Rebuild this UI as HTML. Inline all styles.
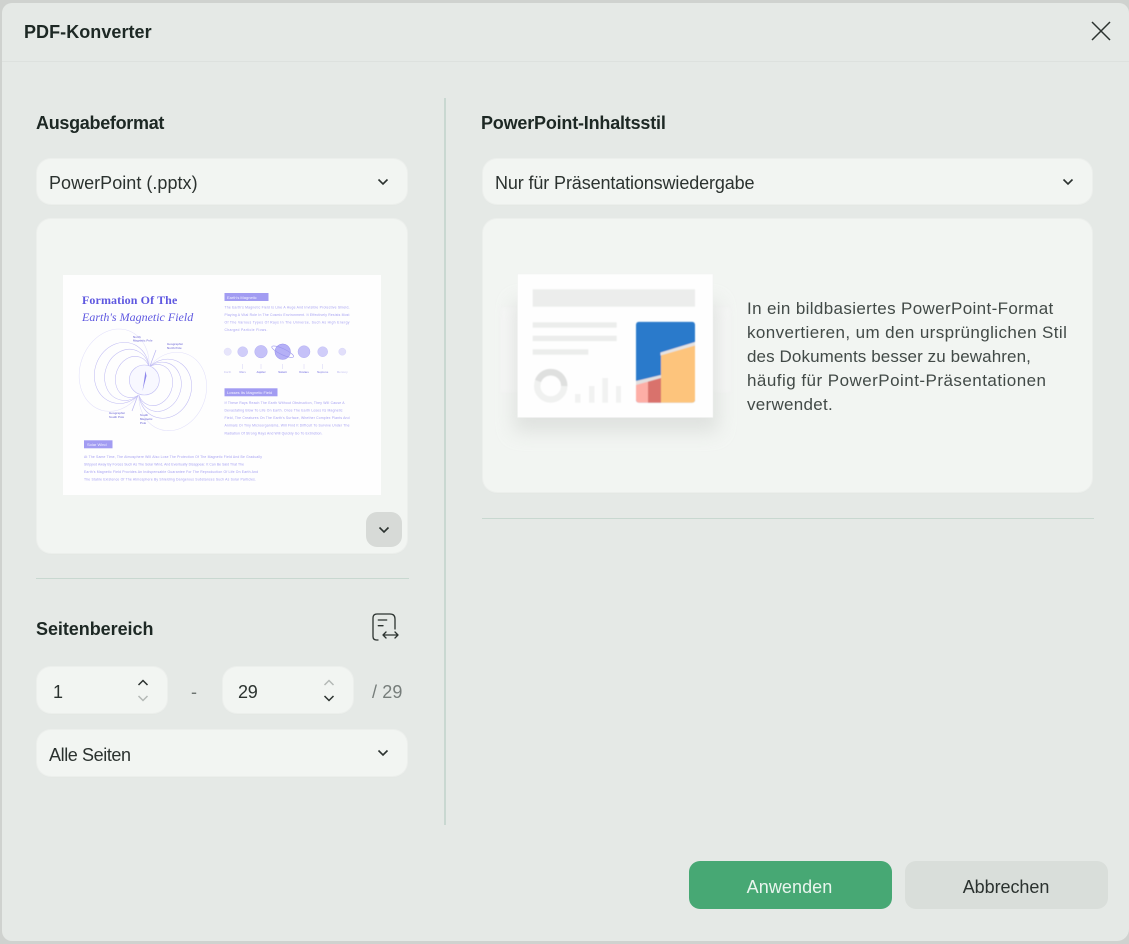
<!DOCTYPE html>
<html lang="de"><head><meta charset="utf-8"><title>PDF-Konverter</title>
<style>
html,body{margin:0;padding:0;background:#cfd2cf}
body{width:1129px;height:944px;overflow:hidden;position:relative;font-family:"Liberation Sans",sans-serif;color:#2b322f}
.abs,.t,.card{position:absolute}
#dlg{position:absolute;left:2px;top:3px;width:1127px;height:938px;background:#e5e9e6;border-radius:10px 10px 12px 10px;overflow:hidden}
.card{background:#f2f5f2;border-radius:14px;box-shadow:0 0 0 1px #ecefec,0 1px 1px #dcdfdc}
.t{white-space:nowrap;line-height:24px}
.b{font-weight:bold;color:#1d2824;font-size:18px}
.r{font-size:18px}
.p{font-size:17px;color:#424a47;left:747px}
svg{position:absolute;overflow:visible}
</style></head><body>
<div id="dlg"></div>
<div class="abs" style="left:2px;top:61px;width:1127px;height:1px;background:#dde1de"></div>
<div class="t b" style="left:24px;top:20px;letter-spacing:.05px">PDF-Konverter</div>
<svg style="left:1091px;top:21px" width="20" height="20" viewBox="0 0 20 20"><path d="M1 1L19 19M19 1L1 19" stroke="#2b322f" stroke-width="1.500" fill="none"/></svg>

<div class="abs" style="left:444px;top:98px;width:2px;height:727px;background:#c9d8d1"></div>
<div class="t b" style="left:36px;top:111px;letter-spacing:-.3px">Ausgabeformat</div>
<div class="t b" style="left:481px;top:111px;letter-spacing:-.2px">PowerPoint-Inhaltsstil</div>

<div class="card" style="left:37px;top:159px;width:370px;height:45px"></div>
<div class="t r" style="left:49px;top:171px;letter-spacing:.03px">PowerPoint (.pptx)</div>
<svg style="left:377px;top:178px" width="12" height="8" viewBox="0 0 12 8"><path d="M1.500 1.500L6 6L10.500 1.500" stroke="#2b322f" stroke-width="1.600" fill="none"/></svg>

<div class="card" style="left:483px;top:159px;width:609px;height:45px"></div>
<div class="t r" style="left:495px;top:171px;letter-spacing:-.12px">Nur für Präsentationswiedergabe</div>
<svg style="left:1062px;top:178px" width="12" height="8" viewBox="0 0 12 8"><path d="M1.500 1.500L6 6L10.500 1.500" stroke="#2b322f" stroke-width="1.600" fill="none"/></svg>

<div class="card" style="left:37px;top:219px;width:370px;height:334px"></div>
<div class="abs" style="left:63px;top:275px;width:318px;height:220px;background:#fefefe"></div>
<svg style="left:0;top:0" width="1129" height="944" viewBox="0 0 1129 944">
<defs><filter id="bl" x="0" y="0" width="100%" height="100%" filterUnits="userSpaceOnUse"><feGaussianBlur stdDeviation=".35"/></filter></defs>
<g filter="url(#bl)">
<g font-family="Liberation Serif, serif" fill="#5f58e0">
<text x="82" y="304" font-size="12" font-weight="bold" letter-spacing=".1">Formation Of The</text>
<text x="82" y="321" font-size="12" font-style="italic">Earth's Magnetic Field</text>
</g>
<g style="fill:#a29cf2">
<rect x="224.500" y="293" width="44" height="8"/><rect x="224.500" y="388.300" width="53" height="8"/><rect x="84" y="440.300" width="28.500" height="8"/>
</g>
<g font-size="4" fill="#f3f2ff" font-family="Liberation Sans,sans-serif">
<text x="227" y="298.800">Earth's Magnetic</text><text x="227" y="394">Losses Its Magnetic Field</text><text x="87" y="446">Solar Wind</text>
</g>
<g font-size="3.400" fill="#a5a0f2" font-family="Liberation Sans,sans-serif">
<text x="224.500" y="308.500" textLength="125">The Earth's Magnetic Field Is Like A Huge And Invisible Protective Shield,</text>
<text x="224.500" y="316" textLength="125">Playing A Vital Role In The Cosmic Environment. It Effectively Resists Most</text>
<text x="224.500" y="323.500" textLength="125">Of The Various Types Of Rays In The Universe, Such As High Energy</text>
<text x="224.500" y="331" textLength="43">Charged Particle Flows.</text>
<text x="224.500" y="404" textLength="120">If These Rays Reach The Earth Without Obstruction, They Will Cause A</text>
<text x="224.500" y="411.600" textLength="118">Devastating Blow To Life On Earth. Once The Earth Loses Its Magnetic</text>
<text x="224.500" y="419" textLength="125">Field, The Creatures On The Earth's Surface, Whether Complex Plants And</text>
<text x="224.500" y="426.600" textLength="125">Animals Or Tiny Microorganisms, Will Find It Difficult To Survive Under The</text>
<text x="224.500" y="434.300" textLength="98">Radiation Of Strong Rays And Will Quickly Go To Extinction.</text>
<text x="84" y="458" textLength="178">At The Same Time, The Atmosphere Will Also Lose The Protection Of The Magnetic Field And Be Gradually</text>
<text x="84" y="465.500" textLength="160">Stripped Away By Forces Such As The Solar Wind, And Eventually Disappear. It Can Be Said That The</text>
<text x="84" y="473" textLength="174">Earth's Magnetic Field Provides An Indispensable Guarantee For The Reproduction Of Life On Earth And</text>
<text x="84" y="480.500" textLength="172">The Stable Existence Of The Atmosphere By Shielding Dangerous Substances Such As Solar Particles.</text>
</g>
<g fill="#c5c1f8" stroke="#a8a3f0" stroke-width=".4">
<circle cx="227.700" cy="351.700" r="3.700" opacity=".4"/><circle cx="242.700" cy="351.700" r="5" opacity=".8"/><circle cx="261" cy="351.700" r="6.300"/><circle cx="282.700" cy="351.700" r="7.800" fill="#b5b0f6" stroke="#8f88ea"/><circle cx="304" cy="351.700" r="6"/><circle cx="322.700" cy="351.700" r="5" opacity=".8"/><circle cx="342.300" cy="351.700" r="3.600" opacity=".5"/>
</g>
<ellipse cx="282.700" cy="351.700" rx="12" ry="3" transform="rotate(25 282.700 351.700)" fill="none" stroke="#9c96ee" stroke-width=".6"/>
<g font-size="2.800" fill="#8d88e6" font-family="Liberation Sans,sans-serif" text-anchor="middle" font-weight="bold">
<text x="227.700" y="373" opacity=".4">Earth</text><text x="242.700" y="373" opacity=".7">Mars</text><text x="261" y="373">Jupiter</text><text x="282.700" y="373">Saturn</text><text x="304" y="373">Uranus</text><text x="322.700" y="373" opacity=".8">Neptune</text><text x="342.300" y="373" opacity=".4">Mercury</text>
</g>
<g stroke="#d3d0f7" stroke-width=".5"><path d="M242.700 364v5M261 364v5M282.700 364v5M304 364v5M322.700 364v5"/></g>
<g fill="none" stroke="#c0bcf3" stroke-width=".55" transform="rotate(20 144 381)">
<path d="M144 366A17 21 0 1 1 144 396"/><path d="M144 366A21 25 0 1 1 144 396"/><path d="M144 366A26 30 0 1 1 144 396"/>
<path d="M144 366A17 21 0 1 0 144 396"/><path d="M144 366A22 26 0 1 0 144 396"/><path d="M144 366A27 31 0 1 0 144 396"/>
<path d="M144 366A33 40 0 1 1 144 396" stroke="#e2e0fa"/><path d="M144 366A34 42 0 1 0 144 396" stroke="#e2e0fa"/>
</g>
<circle cx="144.300" cy="380" r="15" fill="#f8f8ff" stroke="#c0bdf4" stroke-width=".6"/>
<path d="M145.500 371L142.500 391L146.500 376Z" fill="#8d86ec"/>
<path d="M150 366L156 350M138 395L132 411" stroke="#bcb8f2" stroke-width=".7"/>
<g font-size="2.900" fill="#8d88df" font-family="Liberation Sans,sans-serif" font-weight="bold">
<text x="133" y="338">North</text><text x="133" y="341.500">Magnetic Pole</text><text x="167" y="345">Geographic</text><text x="167" y="349">North Pole</text><text x="109" y="414">Geographic</text><text x="109" y="418">South Pole</text><text x="140" y="416">South</text><text x="140" y="420">Magnetic</text><text x="140" y="424">Pole</text>
</g>
</g>
</svg>
<div class="abs" style="left:366px;top:512px;width:36px;height:35px;background:#d7dad7;border-radius:11px"></div>
<svg style="left:378px;top:526px" width="12" height="8" viewBox="0 0 12 8"><path d="M1.500 1.500L6 6L10.500 1.500" stroke="#2b322f" stroke-width="1.600" fill="none"/></svg>

<div class="card" style="left:483px;top:219px;width:609px;height:273px"></div>
<svg style="left:0;top:0" width="1129" height="944" viewBox="0 0 1129 944">
<defs><filter id="s" x="-30%" y="-30%" width="160%" height="160%"><feGaussianBlur stdDeviation="9"/></filter>
<filter id="g" x="-10%" y="-10%" width="120%" height="120%"><feGaussianBlur stdDeviation="1.500"/></filter>
<filter id="ib" x="0" y="0" width="100%" height="100%" filterUnits="userSpaceOnUse"><feGaussianBlur stdDeviation=".4"/></filter></defs>
<rect x="500" y="307" width="231" height="86" fill="#f6f7f6" stroke="#eef0ee" filter="url(#g)"/>
<rect x="514" y="302" width="204" height="130" fill="#d5d8d5" opacity=".65" filter="url(#s)"/>
<rect x="517.500" y="274" width="195.500" height="143.500" fill="#fefefe" stroke="#f0f1f0" stroke-width=".5"/>
<g filter="url(#ib)">
<g fill="#ecedec"><rect x="532.700" y="289.300" width="162.300" height="17.400"/><rect x="532.700" y="322.300" width="84" height="5.400"/><rect x="532.700" y="335.700" width="84" height="5.400"/><rect x="532.700" y="349.300" width="55.600" height="5.400"/></g>
<g fill="#f1f2f1"><rect x="575" y="394" width="5.500" height="8.700"/><rect x="589" y="386" width="5.500" height="16.700"/><rect x="602.300" y="378" width="5.700" height="24.700"/><rect x="616" y="386" width="5" height="16.700"/></g>
<circle cx="550.700" cy="386" r="13.500" fill="none" stroke="#f0f1f0" stroke-width="6.400"/>
<path d="M538 381A13.500 13.500 0 0 1 564.200 386" fill="none" stroke="#dfe0df" stroke-width="6.400"/>
<clipPath id="c"><rect x="636" y="321.700" width="59" height="81" rx="3"/></clipPath>
<g clip-path="url(#c)"><rect x="636" y="321.700" width="59" height="81" fill="#2a7acb"/>
<path d="M636 383L661 376V402.700H636Z" fill="#fdaea6"/>
<path d="M648 380L661 376V402.700H648Z" fill="#d9726c"/>
<path d="M636 381L661 375V378L636 385Z" fill="#e2dfdf"/>
<path d="M661 353L695 343V402.700H661Z" fill="#fdc47c"/>
<path d="M660.500 352.500L695 342V345.500L660.500 355.500Z" fill="#e5e3e3"/></g>
</g>
</svg>
<div class="t p" style="top:297px;letter-spacing:.36px">In ein bildbasiertes PowerPoint-Format</div>
<div class="t p" style="top:321px;letter-spacing:.4px">konvertieren, um den ursprünglichen Stil</div>
<div class="t p" style="top:345px;letter-spacing:.1px">des Dokuments besser zu bewahren,</div>
<div class="t p" style="top:369px;letter-spacing:.47px">häufig für PowerPoint-Präsentationen</div>
<div class="t p" style="top:393px;letter-spacing:.28px">verwendet.</div>

<div class="abs" style="left:482px;top:518px;width:612px;height:1px;background:#c8d8d0"></div>
<div class="abs" style="left:36px;top:578px;width:373px;height:1px;background:#c8d8d0"></div>

<div class="t b" style="left:36px;top:617px;letter-spacing:-.05px">Seitenbereich</div>
<svg style="left:371px;top:612px" width="30" height="30" viewBox="0 0 30 30" fill="none" stroke="#2b322f" stroke-width="1.300" stroke-linecap="round" stroke-linejoin="round"><path d="M7 28H5.500Q2 28 2 24.500V6Q2 2 6 2H19Q24 2 24 7V17"/><path d="M7.300 8H15.700M7.300 13.700H12"/><path d="M12 23H27M15 20L12 23L15 26M24 20L27 23L24 26"/></svg>

<div class="card" style="left:37px;top:667px;width:130px;height:46px"></div>
<div class="t r" style="left:53px;top:680px">1</div>
<svg style="left:137px;top:679px" width="12" height="24" viewBox="0 0 12 24" fill="none" stroke-width="1.500"><path d="M1.500 6L6 1.500L10.500 6" stroke="#2b322f"/><path d="M1.500 17L6 21.500L10.500 17" stroke="#b4b9b6"/></svg>
<div class="t" style="left:191px;top:680px;font-size:18px;color:#6d7471">-</div>
<div class="card" style="left:223px;top:667px;width:130px;height:46px"></div>
<div class="t r" style="left:238px;top:680px;letter-spacing:-.2px">29</div>
<svg style="left:323px;top:679px" width="12" height="24" viewBox="0 0 12 24" fill="none" stroke-width="1.500"><path d="M1.500 6L6 1.500L10.500 6" stroke="#b4b9b6"/><path d="M1.500 17L6 21.500L10.500 17" stroke="#2b322f"/></svg>
<div class="t" style="left:372px;top:680px;font-size:18px;color:#767d7a;letter-spacing:.1px">/ 29</div>

<div class="card" style="left:37px;top:730px;width:370px;height:46px"></div>
<div class="t r" style="left:49px;top:743px;letter-spacing:-.4px">Alle Seiten</div>
<svg style="left:377px;top:749px" width="12" height="8" viewBox="0 0 12 8"><path d="M1.500 1.500L6 6L10.500 1.500" stroke="#2b322f" stroke-width="1.600" fill="none"/></svg>

<div class="abs" style="left:689px;top:861px;width:203px;height:48px;background:#47a874;border-radius:11px"></div>
<div class="t" style="left:689px;top:875px;width:201px;text-align:center;font-size:18px;color:#e8f5ee;letter-spacing:.08px">Anwenden</div>
<div class="abs" style="left:905px;top:861px;width:203px;height:48px;background:#d9deda;border-radius:11px"></div>
<div class="t" style="left:905px;top:875px;width:202px;text-align:center;font-size:18px;color:#2b322f;letter-spacing:-.05px">Abbrechen</div>
</body></html>
